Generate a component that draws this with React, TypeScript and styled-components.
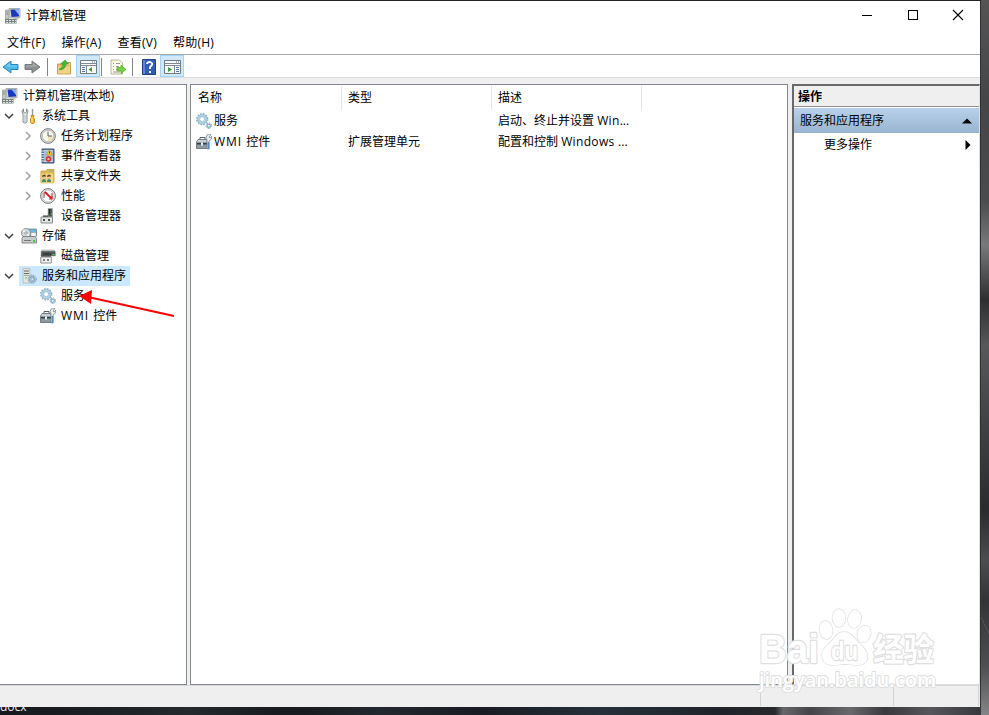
import React from "react";
import styled, { createGlobalStyle, css } from "styled-components";

const GlobalStyle = createGlobalStyle`
  html, body { margin: 0; padding: 0; background: #1b1e22; }
  body { overflow: hidden; }
  * { box-sizing: border-box; }
`;

const Desktop = styled.div`
  position: relative;
  width: 989px;
  height: 715px;
  overflow: hidden;
  padding-top: 1px;
  background:
    linear-gradient(65deg, transparent 46%, #83858566 49%, transparent 52%) 981px 610px / 8px 30px no-repeat,
    linear-gradient(180deg, #545455 0, #454648 100px, #494b4d 200px, #77797a 245px, #2d2e30 300px, #56585a 345px, #424347 420px, #292b2f 510px, #4b4d50 560px, #313337 600px, #4d4e51 665px, #858587 715px) 981px 0 / 8px 715px no-repeat,
    linear-gradient(90deg, #15181d 0, #23292c 190px, #171a1e 290px, #22292e 380px, #191c22 480px, #263039 600px, #20242a 720px, #27282b 775px, #67676a 783px, #454549 810px, #69696c 850px, #39393e 885px, #56565b 930px, #37383d 981px) 0 707px / 981px 8px no-repeat,
    #242429;
  font-family: "Open Sans", "Noto Sans CJK SC", sans-serif;
  font-size: 12px;
  line-height: 18px;
  color: #000;
`;

const Window = styled.main`
  width: 981px;
  height: 706px;
  background: #efefef;
  border-right: 1px solid #303135;
  display: flex;
  flex-direction: column;
`;

const TitleBar = styled.header`
  height: 29px;
  display: flex;
  align-items: center;
  background: #fff;
  padding-left: 5px;
  flex: none;
`;
const WindowTitle = styled.span`
  margin-left: 5px;
  flex: 1;
`;
const WindowControls = styled.div`
  display: flex;
  margin-right: -1px;
  padding-bottom: 1px;
`;
const WindowButton = styled.button`
  width: 45.5px;
  height: 28px;
  padding: 0;
  border: 0;
  background: transparent;
  display: flex;
  align-items: center;
  justify-content: center;
`;
const MenuBar = styled.nav`
  height: 24px;
  display: flex;
  align-items: center;
  gap: 16px;
  padding: 2px 0 0 7px;
  background: #fff;
  flex: none;
`;
const MenuItem = styled.span`
  white-space: nowrap;
  letter-spacing: 0.25px;
`;
const Toolbar = styled.div`
  height: 24px;
  flex: none;
  display: flex;
  align-items: center;
  background: #fff;
  border-top: 1px solid #a9a9a9;
  border-bottom: 1px solid #dcdcdc;
`;
const ToolButton = styled.span<{ $active?: boolean; $width?: number }>`
  width: ${(p) => p.$width ?? 24}px;
  height: 22px;
  display: flex;
  align-items: center;
  justify-content: center;
  padding-top: 2px;
  ${(p) => p.$active && css`background: #d1e8fb; border: 1px solid #a2d4fa;`}
`;
const ToolSeparator = styled.span<{ $before?: number; $after?: number }>`
  width: 1px;
  height: 18px;
  margin: 2px ${(p) => p.$after ?? 4}px 0 ${(p) => p.$before ?? 2}px;
  background: #858585;
`;
const Panes = styled.div`
  display: flex;
  height: 607px;
  padding-top: 6px;
  flex: none;
`;
const TreePane = styled.aside`
  width: 187px;
  height: 601px;
  background: #fff;
  border: 1px solid #828790;
  border-left: 0;
  padding-top: 1px;
`;
const TreeRow = styled.div<{ $level: number }>`
  height: 20px;
  display: flex;
  align-items: center;
  padding-left: ${(p) => (p.$level === 0 ? 0 : p.$level * 19 - 16)}px;
`;
const Expander = styled.span`
  width: 16px;
  height: 16px;
  display: flex;
  align-items: center;
  justify-content: center;
  padding-right: 4px;
`;
const TreeLabel = styled.span<{ $selected?: boolean; $level: number }>`
  height: 20px;
  display: flex;
  align-items: center;
  gap: 5px;
  padding: 0 4px 0 2px;
  background: ${(p) => (p.$selected ? "#cce8ff" : "transparent")};
  white-space: nowrap;
`;
const LatinWord = styled.span<{ $tracking: number }>`
  letter-spacing: ${(p) => p.$tracking}px;
`;
const ListPane = styled.section`
  width: 598px;
  height: 601px;
  margin-left: 3px;
  background: #fff;
  border: 1px solid #828790;
`;
const ListHeader = styled.div`
  display: grid;
  grid-template-columns: 151px 150px 150px;
  height: 25px;
  padding-top: 1px;
`;
const ColumnHeader = styled.span`
  border-right: 1px solid #e5e5e5;
  padding: 3px 0 0 6px;
  &:first-child { padding-left: 7px; }
`;
const ListRow = styled.div`
  height: 21px;
  display: grid;
  grid-template-columns: 151px 150px 150px;
  align-items: center;
`;
const Cell = styled.span`
  padding-left: 6px;
  white-space: nowrap;
`;
const NameCell = styled(Cell)`
  display: flex;
  align-items: center;
  padding-left: 5px;
  gap: 2px;
`;
const ActionPane = styled.aside`
  width: 188px;
  height: 601px;
  margin-left: 4px;
  background: #fff;
  border: 1px solid #dedede;
  border-left: 2px solid #696969;
  border-top: 2px solid #696969;
`;
const ActionTitle = styled.div`
  height: 21px;
  padding: 2px 0 0 4px;
  font-weight: 700;
  background: #efefef;
  border-bottom: 1px solid #929292;
`;
const ActionGroup = styled.div`
  height: 25px;
  margin-top: 1px;
  display: flex;
  align-items: center;
  justify-content: space-between;
  padding: 0 7px 0 6px;
  background: linear-gradient(#b9d1ea, #99b4d1);
`;
const ActionItem = styled.div`
  height: 23px;
  display: flex;
  align-items: center;
  justify-content: space-between;
  padding: 0 8px 0 30px;
`;
const StatusBar = styled.footer`
  height: 22px;
  flex: none;
  display: flex;
  background: #efefef;
  border-top: 1px solid #d8d8d8;
`;
const StatusPart = styled.span<{ $width: number }>`
  width: ${(p) => p.$width}px;
  height: 20px;
  border-right: 1px solid #d2d2d2;
`;
const DesktopLabel = styled.div`
  height: 8px;
  width: 60px;
  overflow: hidden;
  color: #e8e8e8;
  line-height: 0;
`;
const Arrow = styled.svg`
  position: absolute;
  left: 76px;
  top: 286px;
`;
const Watermark = styled.svg`
  position: absolute;
  left: 750px;
  top: 600px;
`;

const ComputerIcon = () => (
  <svg width="16" height="16" viewBox="0 0 16 16">
    <path d="M.5 2h3.500v9H.5z" fill="#c5c9c6" stroke="#858c8e" strokeWidth=".6" />
    <path d="M1 4h2m-2 2h2" stroke="#69747b" strokeWidth=".7" />
    <path d="M4 .5h11v9L5 10z" fill="#dcddd4" stroke="#9a9e9b" strokeWidth=".8" />
    <path d="M5.500 1.500H14v7l-7.500.5z" fill="#1839bf" />
    <path d="M9.500 1.500H14V7z" fill="#8bb4f9" />
    <path d="M8 10h5l1 1.500H8z" fill="#c3c6bd" />
    <path d="M0 11h11.500v4.500H0z" fill="#75827d" />
    <path d="M1 12.500h10M1 14.500h10" stroke="#dde2da" strokeDasharray="2 1" />
  </svg>
);
const ToolsIcon = () => (
  <svg width="16" height="16" viewBox="0 0 16 16">
    <path d="M2.500.8v3.400l1.500 1 1.500-1V.8q3 2.200.5 5.200v8q-2 2.500-4 0V6Q-.5 3 2.500.8z" fill="#eef0ef" stroke="#7b8386" strokeWidth=".9" />
    <path d="M4 7v7" stroke="#b2b9bb" />
    <path d="M11.500 1v8" stroke="#9a9c9a" strokeWidth="1.500" />
    <path d="M10 7.500h3l-.5 2 1 1v4l-1 1h-2l-1-1v-4l1-1z" fill="#f8ba18" stroke="#bd7d12" strokeWidth=".8" />
    <path d="M11 10v4" stroke="#fff09b" />
  </svg>
);
const ClockIcon = () => (
  <svg width="16" height="16" viewBox="0 0 16 16">
    <circle cx="8" cy="8" r="7.4" fill="#cfd4d7" stroke="#727a80" strokeWidth=".9" />
    <circle cx="8" cy="8" r="5.7" fill="#fffdeb" stroke="#a9aca9" strokeWidth=".7" />
    <path d="M8 8h5.5A5.5 5.5 0 0 1 8 13.500z" fill="#e9d9a1" opacity=".65" />
    <path d="M8 3.500v4.500h4" fill="none" stroke="#48657c" />
  </svg>
);
const EventIcon = () => (
  <svg width="16" height="16" viewBox="0 0 16 16">
    <path d="M2 1h12v14H2z" fill="#5a7ba2" stroke="#405674" />
    <path d="M4 2h9v12H4z" fill="#c4d5e8" />
    <path d="M4 4h9M4 6h9M4 8h9M4 10h9M4 12h9" stroke="#708fae" strokeWidth=".7" />
    <path d="M1 3h3M1 5.500h3M1 8h3M1 10.500h3M1 13h3" stroke="#e5e9eb" strokeWidth="1.1" />
    <path d="M9.500 2l3 5h-6z" fill="#f6cf25" stroke="#b98d22" strokeWidth=".6" />
    <path d="M9.500 3.500v2" stroke="#333" />
    <circle cx="8.5" cy="11" r="2.7" fill="#d72c27" />
    <path d="M7.5 10l2 2m0-2l-2 2" stroke="#fff" strokeWidth=".8" />
  </svg>
);
const SharedIcon = () => (
  <svg width="16" height="16" viewBox="0 0 16 16">
    <path d="M1 3h5l1-1.500h7V14H1z" fill="#e4bb52" stroke="#ca9c39" strokeWidth=".8" />
    <path d="M1 5h12.500v10H1z" fill="#f3d77f" stroke="#d7b253" strokeWidth=".7" />
    <path d="M9 3h4" stroke="#62aad6" />
    <path d="M2 9q0-2 2-2t2 2-2 2-2-2m5 0q0-2 2-2t2 2-2 2-2-2" fill="#efbd90" />
    <path d="M2 9q0-2.500 2-2.500t2 2H4M7 9q0-2.500 2-2.500t2 2H9" fill="#65452d" />
    <path d="M2 14q0-3 2-3t2 3zm5 0q0-3 2-3t2 3z" fill="#3d8a70" />
  </svg>
);
const PerformanceIcon = () => (
  <svg width="16" height="16" viewBox="0 0 16 16">
    <circle cx="8" cy="8" r="7.4" fill="#e6e8e8" stroke="#737a7d" />
    <circle cx="8" cy="8" r="5.9" fill="#fff" stroke="#aaa" strokeWidth=".6" />
    <path d="M4 10V5l2-1M12 5v5" fill="none" stroke="#9b3433" />
    <path d="M5 4l7 7" stroke="#e11620" strokeWidth="1.8" />
    <path d="M9 11h3V8" fill="none" stroke="#c42c2c" />
  </svg>
);
const DeviceIcon = () => (
  <svg width="16" height="16" viewBox="0 0 16 16">
    <path d="M8 .5h4.500V9H8z" fill="#4c5552" stroke="#a1a7a4" strokeWidth=".6" />
    <path d="M9.500 1v5" stroke="#1f2523" /><path d="M11 6h1" stroke="#61ed46" />
    <path d="M3 7.500h5v2H3z" fill="#303735" />
    <path d="M1 9h11.500v6H1z" fill="#e4e6e3" stroke="#858b87" />
    <path d="M4 11v2m5-2v2" stroke="#191919" strokeWidth="1.500" />
  </svg>
);
const StorageIcon = () => (
  <svg width="16" height="16" viewBox="0 0 16 16">
    <path d="M6 1h9.500v7H6z" fill="#64b7dd" stroke="#647f88" strokeWidth=".7" />
    <path d="M10 4.500h5v4h-5z" fill="#fafafa" stroke="#888" strokeWidth=".5" />
    <circle cx="5" cy="5" r="4.5" fill="#d4dada" stroke="#7b8587" strokeWidth=".8" />
    <path d="M5 5L2 2m3 3l3 3" stroke="#f8fafa" strokeWidth="1.5" />
    <circle cx="5" cy="5" r="1.2" fill="#fff" stroke="#899" />
    <path d="M2 8.500h12l1.500 2V15H1v-4.500z" fill="#c9cecd" stroke="#6d7475" strokeWidth=".8" />
    <path d="M3 12.500h7" stroke="#777" /><path d="M12 13h2" stroke="#33d12b" strokeWidth="2" />
  </svg>
);
const DiskIcon = () => (
  <svg width="16" height="16" viewBox="0 0 16 16">
    <path d="M2 2h12l1.500 2v4H1V4z" fill="#505956" stroke="#a0a6a3" strokeWidth=".6" />
    <path d="M2 2.700h12" stroke="#cbd0cd" /><path d="M3 6h8" stroke="#222" /><path d="M12.500 6.500h2" stroke="#37d844" />
    <path d="M.8 9h10.500v6H.8z" fill="#f1f1ef" stroke="#8c918f" />
    <path d="M1 8h10" stroke="#313937" />
    <path d="M4 11v2m4-2v2" stroke="#333" strokeWidth="1.2" />
  </svg>
);
const ServicesIcon = () => (
  <svg width="16" height="16" viewBox="0 0 16 16">
    <circle cx="6.2" cy="6.2" r="5.4" fill="none" stroke="#93b6c8" strokeWidth="1.6" strokeDasharray="1.700 1.130" />
    <circle cx="6.2" cy="6.2" r="3.8" fill="#fff" stroke="#a9d0e4" strokeWidth="2.2" />
    <circle cx="6.2" cy="6.2" r="4.9" fill="none" stroke="#86acbf" strokeWidth=".5" />
    <circle cx="6.2" cy="6.2" r="2.5" fill="#fff" stroke="#84a9bd" strokeWidth=".7" />
    <circle cx="12.8" cy="12.7" r="2.7" fill="none" stroke="#648ca5" strokeWidth="1" strokeDasharray="1.2 .9" />
    <circle cx="12.8" cy="12.7" r="1.6" fill="#f3faff" stroke="#85b2cd" strokeWidth="1.2" />
  </svg>
);
const ApplicationIcon = () => (
  <svg width="16" height="16" viewBox="0 0 16 16">
    <path d="M2 .5h7V15H2z" fill="#e2e5e3" stroke="#b0b7b7" strokeWidth=".8" />
    <path d="M3 3h5M3 5.500h5" stroke="#5f6863" /><path d="M3 7.500h5" stroke="#a1aaa5" />
    <path d="M4 10h2" stroke="#60ca52" />
    <circle cx="11.2" cy="11.2" r="4" fill="none" stroke="#7793aa" strokeDasharray="1.35 .75" />
    <circle cx="11.2" cy="11.2" r="2.6" fill="#edf7fb" stroke="#93b1ca" strokeWidth="1.7" />
    <circle cx="11.2" cy="11.2" r="1.3" fill="#f5fafc" stroke="#6689a4" strokeWidth=".7" />
  </svg>
);
const WmiIcon = () => (
  <svg width="16" height="16" viewBox="0 0 16 16">
    <path d="M4 5V3.500h5v2" fill="none" stroke="#515e65" />
    <path d="M2 5.500h9l1 3v6H.5V8z" fill="#8e9aa2" stroke="#5c6970" strokeWidth=".8" />
    <path d="M2 6h8l1 2H1z" fill="#c6ced2" />
    <path d="M1 9h11v1.500H1z" fill="#323e46" /><path d="M5 8.500h2v3H5z" fill="#e7eef1" />
    <path d="M11 1q2-2 4-.5L13 3l1 1 2-2q0 4-3 5v8h-2V6q-2-2 0-5z" fill="#e5ebee" stroke="#727c81" strokeWidth=".7" />
    <path d="M12.500 8v7" stroke="#4a8ec3" strokeWidth="1.800" />
  </svg>
);

const ChevronIcon = ({ open }: { open: boolean }) => (
  <svg width="10" height="10" viewBox="0 0 10 10">
    <path d={open ? "M1 3l4 4 4-4" : "M3 1l4 4-4 4"} fill="none" stroke={open ? "#404040" : "#a0a0a0"} strokeWidth="1.5" />
  </svg>
);
const NavArrow = ({ forward = false }: { forward?: boolean }) => (
  <svg width="17" height="14" viewBox="0 0 17 14">
    <path d={forward ? "M1 4.500h7V1l8 6-8 6V9.500H1z" : "M16 4.500H9V1L1 7l8 6V9.500h7z"} fill={forward ? "#8d9192" : "#4ab8e9"} stroke={forward ? "#777b7d" : "#2d84b6"} />
    <path d={forward ? "M2 5.500h7V3l4 3.500H2z" : "M15 5.500H8V3L4 6.500h11z"} fill={forward ? "#a9adae" : "#77d1f4"} />
  </svg>
);
const UpFolderIcon = () => (
  <svg width="16" height="16" viewBox="0 0 16 16">
    <path d="M1.500 5h6l1-1.500h6V15h-13z" fill="#e2bd64" stroke="#bc9238" strokeWidth=".8" />
    <path d="M2 7.500h12v7H2z" fill="#f1d183" /><path d="M9 5h5" stroke="#fff1b5" />
    <path d="M3 10q4-1 4-5H4.500L9 1l3.500 4H10q0 5-6 6z" fill="#48b735" stroke="#2a8e29" strokeWidth=".5" />
  </svg>
);
const PaneIcon = ({ right = false }: { right?: boolean }) => (
  <svg width="17" height="14" viewBox="0 0 17 14">
    <path d="M.5.5h16v13H.5z" fill="#f7f9fa" stroke="#6f7a82" />
    <path d="M1 3.5h15M1 5.5h15" stroke="#7f8a93" /><path d="M12 2h1m1 0h1" stroke="#6f7a82" />
    <path d={right ? "M10.5 6v7" : "M6.5 6v7"} stroke="#7c8994" />
    <path d={right ? "M12 7.5h3m-3 2h3m-3 2h3" : "M2 7.5h3m-3 2h3m-3 2h3"} stroke="#4d78a5" />
    <path d={right ? "M4 7l4 2.5L4 12z" : "M12 7L8.500 9.5l3.500 2.5z"} fill="#32a034" />
  </svg>
);
const ExportIcon = () => (
  <svg width="17" height="16" viewBox="0 0 17 16">
    <path d="M1 1h8.500l3 3v11H1z" fill="#fffbe4" stroke="#aaa280" strokeWidth=".8" />
    <path d="M3 4.500h1m2 0h4M3 7.500h1m2 0h3M3 10.500h1m2 0h3M3 13h7" stroke="#8b8ba8" strokeWidth=".9" />
    <path d="M7 8.500h4V6l5 4.500-5 4V12H7z" fill="#79cf43" stroke="#4ea52b" strokeWidth=".7" />
  </svg>
);
const HelpIcon = () => (
  <svg width="14" height="16" viewBox="0 0 14 16">
    <path d="M.5.5h13v15H.5z" fill="#315dbb" stroke="#243f7d" />
    <path d="M2 1v14" stroke="#91a8ee" />
    <path d="M5 5q0-2 3-2 3 1 2 3L8 8v2" fill="none" stroke="#fff" strokeWidth="1.8" /><path d="M7 12h2v2H7z" fill="#fff" />
  </svg>
);
const WindowButtonIcon = ({ kind }: { kind: "minimize" | "maximize" | "close" }) => (
  <svg width="12" height="12" viewBox="0 0 12 12" fill="none" stroke="#000" shapeRendering={kind === "close" ? "auto" : "crispEdges"}>
    {kind === "minimize" && <path d="M1 6.5h10" />}
    {kind === "maximize" && <path d="M1.5 1.5h9v9h-9z" />}
    {kind === "close" && <path d="M1 1l10 10M11 1L1 11" strokeWidth="1.1" />}
  </svg>
);

const MixedText = ({ text }: { text: string }) => (
  <span>
    {text.split(/([A-Za-z]+ ?)/).map((part, i) =>
      /[A-Za-z]/.test(part)
        ? <LatinWord key={i} $tracking={part.startsWith("WMI") ? 1 : 0.35}>{part}</LatinWord>
        : part
    )}
  </span>
);

type TreeEntry = { label: string; level: number; icon: React.ReactNode; open?: boolean; selected?: boolean };
const treeEntries: TreeEntry[] = [
  { label: "计算机管理(本地)", level: 0, icon: <ComputerIcon /> },
  { label: "系统工具", level: 1, icon: <ToolsIcon />, open: true },
  { label: "任务计划程序", level: 2, icon: <ClockIcon />, open: false },
  { label: "事件查看器", level: 2, icon: <EventIcon />, open: false },
  { label: "共享文件夹", level: 2, icon: <SharedIcon />, open: false },
  { label: "性能", level: 2, icon: <PerformanceIcon />, open: false },
  { label: "设备管理器", level: 2, icon: <DeviceIcon /> },
  { label: "存储", level: 1, icon: <StorageIcon />, open: true },
  { label: "磁盘管理", level: 2, icon: <DiskIcon /> },
  { label: "服务和应用程序", level: 1, icon: <ApplicationIcon />, open: true, selected: true },
  { label: "服务", level: 2, icon: <ServicesIcon /> },
  { label: "WMI 控件", level: 2, icon: <WmiIcon /> },
];
const listEntries = [
  { name: "服务", type: "", description: "启动、终止并设置 Win...", icon: <ServicesIcon /> },
  { name: "WMI 控件", type: "扩展管理单元", description: "配置和控制 Windows ...", icon: <WmiIcon /> },
];

export default function App() {
  return (
    <>
      <GlobalStyle />
      <Desktop>
        <Window>
          <TitleBar>
            <ComputerIcon />
            <WindowTitle>计算机管理</WindowTitle>
            <WindowControls>
              <WindowButton aria-label="最小化"><WindowButtonIcon kind="minimize" /></WindowButton>
              <WindowButton aria-label="最大化"><WindowButtonIcon kind="maximize" /></WindowButton>
              <WindowButton aria-label="关闭"><WindowButtonIcon kind="close" /></WindowButton>
            </WindowControls>
          </TitleBar>
          <MenuBar>
            {["文件(F)", "操作(A)", "查看(V)", "帮助(H)"].map((label) => <MenuItem key={label}>{label}</MenuItem>)}
          </MenuBar>
          <Toolbar>
            <ToolButton $width={20}><NavArrow /></ToolButton>
            <ToolButton $width={25}><NavArrow forward /></ToolButton>
            <ToolSeparator $after={4} />
            <ToolButton><UpFolderIcon /></ToolButton>
            <ToolButton $active><PaneIcon /></ToolButton>
            <ToolSeparator $before={1} $after={3} />
            <ToolButton $width={26}><ExportIcon /></ToolButton>
            <ToolSeparator $before={1} $after={4} />
            <ToolButton $width={23}><HelpIcon /></ToolButton>
            <ToolButton $active><PaneIcon right /></ToolButton>
          </Toolbar>
          <Panes>
            <TreePane>
              {treeEntries.map((entry) => (
                <TreeRow key={entry.label} $level={entry.level}>
                  {entry.level > 0 && <Expander>{entry.open !== undefined && <ChevronIcon open={entry.open} />}</Expander>}
                  <TreeLabel $selected={entry.selected} $level={entry.level}>{entry.icon}<MixedText text={entry.label} /></TreeLabel>
                </TreeRow>
              ))}
            </TreePane>
            <ListPane>
              <ListHeader>
                {["名称", "类型", "描述"].map((title) => <ColumnHeader key={title}>{title}</ColumnHeader>)}
              </ListHeader>
              {listEntries.map((entry) => (
                <ListRow key={entry.name}>
                  <NameCell>{entry.icon}<MixedText text={entry.name} /></NameCell>
                  <Cell>{entry.type}</Cell>
                  <Cell><MixedText text={entry.description} /></Cell>
                </ListRow>
              ))}
            </ListPane>
            <ActionPane>
              <ActionTitle>操作</ActionTitle>
              <ActionGroup>服务和应用程序<svg width="10" height="6"><path d="M0 5.5L5 .5l5 5z" /></svg></ActionGroup>
              <ActionItem>更多操作<svg width="6" height="10"><path d="M.5 0l5 5-5 5z" /></svg></ActionItem>
            </ActionPane>
          </Panes>
          <StatusBar>
            <StatusPart $width={761} /><StatusPart $width={133} /><StatusPart $width={85} />
          </StatusBar>
        </Window>
        <DesktopLabel>docx</DesktopLabel>
        <Arrow width="100" height="34" viewBox="0 0 100 34">
          <path d="M98 30L12 11" stroke="#f00" strokeWidth="2" />
          <path d="M3 10L16 4l-1 14z" fill="#f00" />
        </Arrow>
        <Watermark width="195" height="96" viewBox="0 0 195 96">
          <g fill="#fff" stroke="#e0e0e0" strokeWidth="1.5" strokeLinejoin="round" fontFamily="Liberation Sans, sans-serif" fontWeight="700" paintOrder="stroke">
            <text x="9" y="63" fontSize="41" textLength="60" lengthAdjust="spacingAndGlyphs" strokeWidth="2.400">Bai</text>
            <text x="123" y="61" fontSize="32" fontFamily="Noto Sans CJK SC" textLength="61" lengthAdjust="spacingAndGlyphs" strokeWidth="2.400">经验</text>
            <text x="9" y="87" fontSize="20" fontFamily="Open Sans, sans-serif" fontWeight="600" textLength="177" lengthAdjust="spacingAndGlyphs" strokeWidth="2">jingyan.baidu.com</text>
            <ellipse cx="76" cy="30" rx="6.5" ry="9" transform="rotate(-8 76 30)" />
            <ellipse cx="89" cy="18" rx="6.5" ry="9" />
            <ellipse cx="104.5" cy="19" rx="6.5" ry="9" transform="rotate(10 104.5 19)" />
            <ellipse cx="114" cy="34" rx="6.5" ry="8.5" transform="rotate(18 114 34)" />
            <path d="M94 32c-8 0-9 7-15 12-5 4-9 9-6 16 3 7 12 5 22 4 10 1 19 3 22-4 2-7-2-11-7-16-6-5-8-12-16-12z" />
            <text x="81" y="60" fontSize="26" textLength="27" lengthAdjust="spacingAndGlyphs" strokeWidth="2.400">du</text>
          </g>
        </Watermark>
      </Desktop>
    </>
  );
}
